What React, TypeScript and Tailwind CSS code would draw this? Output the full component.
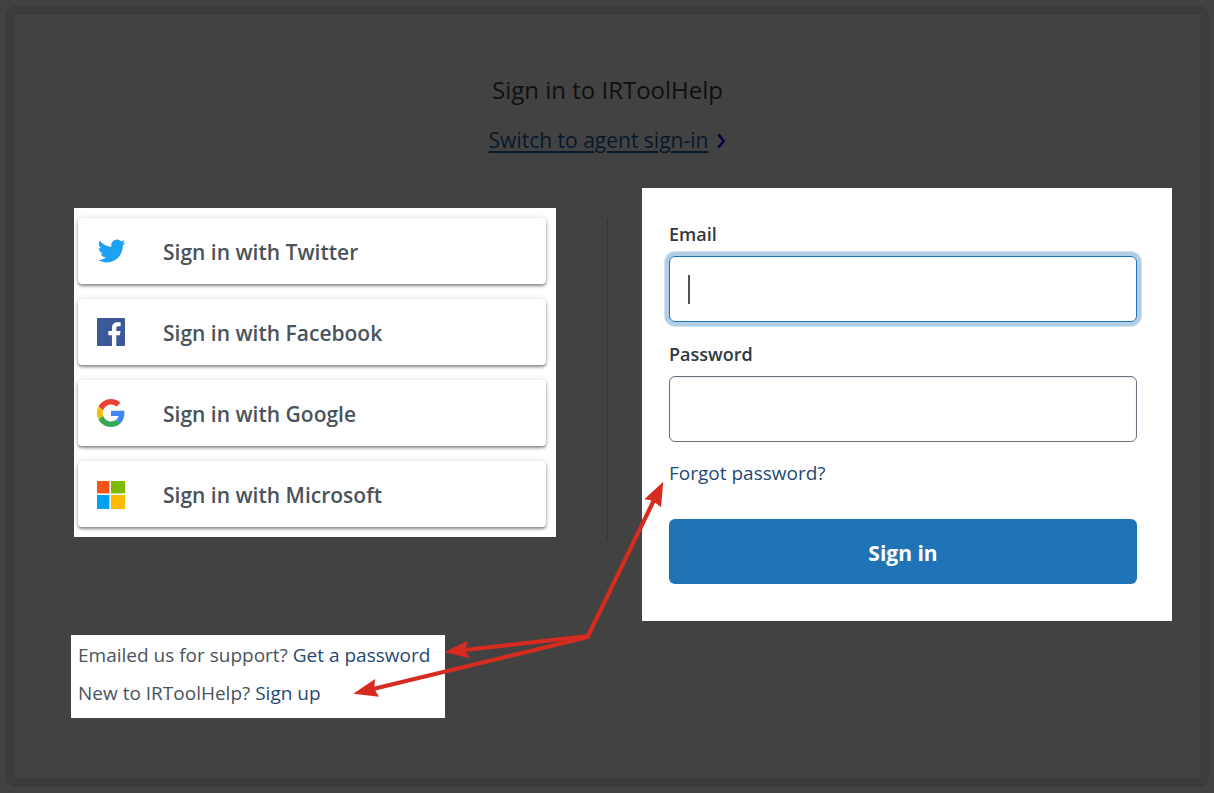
import type { ReactNode } from "react";

function TwitterIcon() {
  return (
    <svg viewBox="0 0 24 24" className="size-7" aria-hidden="true">
      <path
        fill="#1da1f2"
        transform="translate(.6 0)"
        d="M23.953 4.57a10 10 0 01-2.825.775 4.958 4.958 0 002.163-2.723c-.951.555-2.005.959-3.127 1.184a4.92 4.92 0 00-8.384 4.482C7.69 8.095 4.067 6.13 1.64 3.162a4.822 4.822 0 00-.666 2.475c0 1.71.87 3.213 2.188 4.096a4.904 4.904 0 01-2.228-.616v.06a4.923 4.923 0 003.946 4.827 4.996 4.996 0 01-2.212.085 4.936 4.936 0 004.604 3.417 9.867 9.867 0 01-6.102 2.105c-.39 0-.779-.023-1.17-.067a13.995 13.995 0 007.557 2.209c9.053 0 13.998-7.496 13.998-13.985 0-.21 0-.42-.015-.63A9.935 9.935 0 0024 4.59z"
      />
    </svg>
  );
}

function FacebookIcon() {
  return (
    <svg viewBox="0 0 24 24" className="size-7" aria-hidden="true">
      <path
        fill="#3b5998"
        d="M23.4 0H.6C.25 0 0 .25 0 .6v22.8c0 .35.25.6.6.6h12.218v-9.294H9.689v-3.621h3.129V8.41c0-3.099 1.894-4.785 4.659-4.785 1.325 0 2.464.097 2.796.141v3.24h-1.921c-1.5 0-1.792.721-1.792 1.771v2.311h3.584l-.465 3.63H16.56V24h6.84c.35 0 .6-.25.6-.6V.6c0-.35-.25-.6-.6-.6"
      />
    </svg>
  );
}

function GoogleIcon() {
  return (
    <svg viewBox="0 0 48 48" className="size-7" aria-hidden="true">
      <path fill="#ea4335" d="M24 9.5c3.54 0 6.71 1.22 9.21 3.6l6.85-6.85C35.9 2.38 30.47 0 24 0 14.62 0 6.51 5.38 2.56 13.22l7.98 6.19C12.43 13.72 17.74 9.5 24 9.5z" />
      <path fill="#4285f4" d="M46.98 24.55c0-1.57-.15-3.09-.38-4.55H24v9.02h12.94c-.58 2.96-2.26 5.48-4.78 7.18l7.73 6c4.51-4.18 7.09-10.36 7.09-17.65z" />
      <path fill="#fbbc05" d="M10.53 28.59c-.48-1.45-.76-2.99-.76-4.59s.27-3.14.76-4.59l-7.98-6.19C.92 16.46 0 20.12 0 24c0 3.88.92 7.54 2.56 10.78l7.97-6.19z" />
      <path fill="#34a853" d="M24 48c6.48 0 11.93-2.13 15.89-5.81l-7.73-6c-2.15 1.45-4.92 2.3-8.16 2.3-6.26 0-11.57-4.22-13.47-9.91l-7.98 6.19C6.51 42.62 14.62 48 24 48z" />
    </svg>
  );
}

function MicrosoftIcon() {
  return (
    <svg viewBox="0 -1 28 28" className="size-7 overflow-visible" aria-hidden="true">
      <path fill="#f65314" d="M0 0h12.4v12.4H0z" />
      <path fill="#7cbb00" d="M14 0h14v12.4H14z" />
      <path fill="#00a1f1" d="M0 14h12.4v14H0z" />
      <path fill="#ffbb00" d="M14 14h14v14H14z" />
    </svg>
  );
}

const providers: { name: string; icon: ReactNode }[] = [
  { name: "Twitter", icon: <TwitterIcon /> },
  { name: "Facebook", icon: <FacebookIcon /> },
  { name: "Google", icon: <GoogleIcon /> },
  { name: "Microsoft", icon: <MicrosoftIcon /> },
];

function Arrows() {
  return (
    <svg
      viewBox="353 480 312 220"
      className="pointer-events-none absolute left-[282px] top-[292px] h-[220px] w-[312px]"
      aria-hidden="true"
    >
      <g stroke="#d62b1f" strokeWidth="4.2" strokeLinecap="round">
        <path d="M588 636 654 500" />
        <path d="M588 636 465 650" />
        <path d="M588 637 373 689" />
      </g>
      <g fill="#d62b1f">
        <path d="M663.3 481.7 644.3 499.3 652.5 500.5 661 507.3z" />
        <path d="M444.3 652.3 467.7 640.7 465.3 650.3 469.7 658.3z" />
        <path d="M353.3 693.7 375 679 374.3 688.7 379 696.7z" />
      </g>
    </svg>
  );
}

export default function App() {
  return (
    <div className="flex min-h-screen flex-col bg-[#424242] py-1.5 pl-1.5 pr-[5px] font-['Open_Sans','Noto_Sans',sans-serif]">
      <main className="flex-1 rounded-[10px] border-[9px] border-[#3b3b3b] pb-10 pl-14 pr-7">
        <header className="flex flex-col items-center pr-7 pt-[59px]">
          <h1 className="text-2xl leading-8 text-[#0f1011]">Sign in to IRToolHelp</h1>
          <a
            href="#agent"
            className="mt-[18px] flex items-center gap-[9px] text-[21px] leading-8 text-[#08192a]"
          >
            <span className="underline decoration-2 underline-offset-[3px]">Switch to agent sign-in</span>
            <svg viewBox="0 0 9 16" className="h-4 w-[9px]" aria-hidden="true">
              <path d="M1.5 2.5 6.7 9 1.5 15.5" fill="none" stroke="#03004a" strokeWidth="2.6" />
            </svg>
          </a>
        </header>

        <div className="relative mt-8 grid grid-cols-[485fr_86px_530fr] items-start">
          <div className="pt-5">
            <div className="ml-[3px] flex flex-col gap-[15px] bg-white py-2.5 pl-1 pr-2.5">
              {providers.map((provider) => (
                <button
                  key={provider.name}
                  type="button"
                  className="flex h-[66px] items-center gap-[38px] rounded-[4px] bg-white pl-[19px] text-[21px] font-semibold text-[#49545c] shadow-[0_0_6px_rgba(0,0,0,0.12),0_2px_3px_rgba(0,0,0,0.42)]"
                >
                  {provider.icon}
                  <span className="pt-1">Sign in with {provider.name}</span>
                </button>
              ))}
            </div>
            <div className="mt-[98px] w-[374px] whitespace-nowrap bg-white pb-1.5 pl-[7px] pt-[1px] text-[19px] leading-[38px] text-[#49545c]">
              <p>
                Emailed us for support?{" "}
                <a href="#password" className="text-[#1f4a73]">Get a password</a>
              </p>
              <p>
                New to IRToolHelp?{" "}
                <a href="#signup" className="text-[#1f4a73]">Sign up</a>
              </p>
            </div>
          </div>

          <div className="ml-[51px] mt-[31px] h-[321px] w-px bg-[#363636]" />

          <form className="flex flex-col bg-white pb-[37px] pl-[27px] pr-[35px] pt-[34px] text-[#2f3941]">
            <label htmlFor="email" className="text-lg font-semibold leading-6">Email</label>
            <div className="relative mt-2.5">
              <input
                id="email"
                type="email"
                className="block h-[66px] w-full rounded-md border border-[#1f73b7] px-[19px] text-[21px] shadow-[0_0_0_4px_#b1cee6,0_0_0_5px_#d3e3f1] outline-none"
              />
              <span className="absolute left-[19px] top-[19px] h-[29px] w-0.5 bg-[#49545c]" />
            </div>
            <label htmlFor="password" className="mt-5 text-lg font-semibold leading-6">Password</label>
            <input
              id="password"
              type="password"
              className="mt-2.5 block h-[66px] w-full rounded-md border border-[#68737d] px-[19px] text-[21px] shadow-[inset_0_1px_2px_#e9ebed] outline-none"
            />
            <a href="#forgot" className="mt-[19px] self-start text-[19px] leading-6 text-[#1f4a73]">
              Forgot password?
            </a>
            <button
              type="submit"
              className="mt-[34px] h-[65px] rounded-md bg-[#1f73b7] pt-1 text-[21px] font-bold text-white"
            >
              Sign in
            </button>
          </form>

          <Arrows />
        </div>
      </main>
    </div>
  );
}
